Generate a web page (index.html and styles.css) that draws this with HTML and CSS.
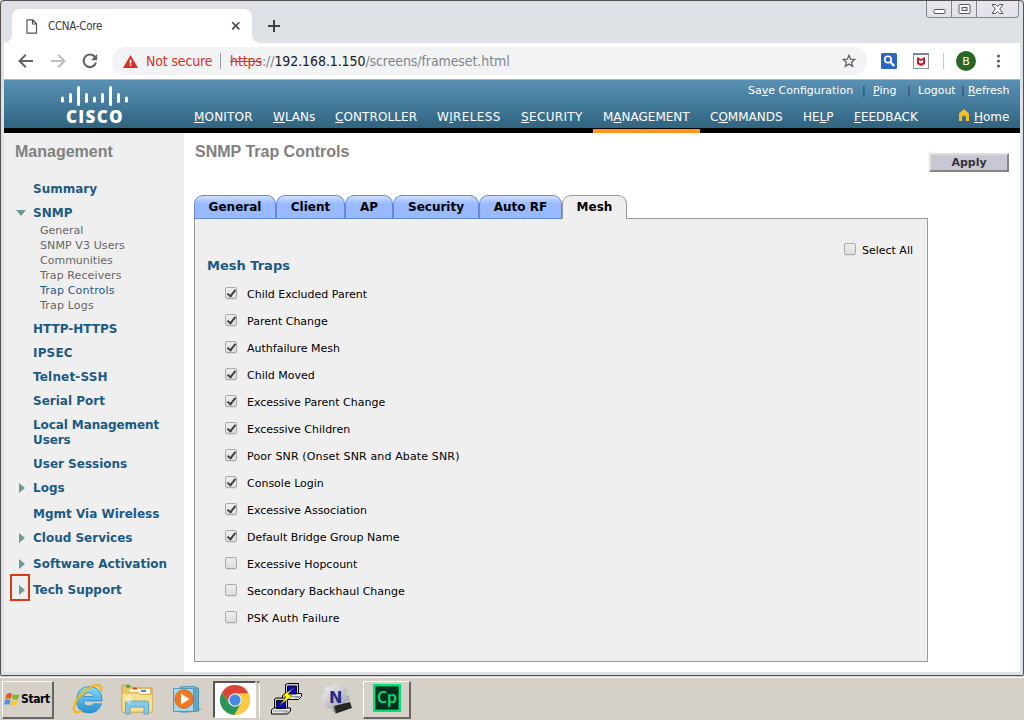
FILE: index.html
```
<!DOCTYPE html>
<html lang="en">
<head>
<meta charset="utf-8">
<title>CCNA-Core</title>
<link rel="stylesheet" href="styles.css">
</head>
<body>
<div class="window">
  <div class="tabstrip">
    <div class="browser-tab">
      <svg class="doc-icon" width="12" height="15" viewBox="0 0 12 15"><path d="M1 .8h5.800l3.700 4v9.400H1zM6.500 1v4h4" fill="none" stroke="#50545a" stroke-width="1.200"/></svg>
      <span class="tab-title">CCNA-Core</span>
      <svg width="10" height="10" viewBox="0 0 10 10"><path d="M1.200 1.200l7.200 7.200M8.400 1.200L1.200 8.400" stroke="#45494e" stroke-width="1.600"/></svg>
    </div>
    <svg class="new-tab" width="12" height="12" viewBox="0 0 12 12"><path d="M6 0v12M0 6h12" stroke="#3c4043" stroke-width="2"/></svg>
    <div class="win-buttons">
      <span class="wb"><svg width="13" height="12" viewBox="0 0 13 12"><rect x="1" y="6.500" width="11" height="4" rx="1" fill="#fff" stroke="#54565c"/></svg></span>
      <span class="wb"><svg width="13" height="12" viewBox="0 0 13 12"><rect x="1" y="1.500" width="11" height="9" rx="1" fill="#fff" stroke="#54565c"/><rect x="4" y="4.500" width="5" height="3" fill="#e3e4eb" stroke="#54565c"/></svg></span>
      <span class="wb"><svg width="13" height="12" viewBox="0 0 13 12"><path d="M1 1.500h3.500l2 2 2-2H12L8.700 6l3.300 4.500H8.500l-2-2-2 2H1L4.300 6z" fill="#fff" stroke="#54565c"/></svg></span>
    </div>
  </div>
  <div class="toolbar">
    <svg width="98" height="24" viewBox="0 0 98 24">
      <path d="M29 12H16.500M21.800 5.700L15.500 12l6.300 6.300" fill="none" stroke="#5f6368" stroke-width="2"/>
      <path d="M47 12h13M54.200 5.700l6.300 6.300-6.300 6.300" fill="none" stroke="#bcbec1" stroke-width="2"/>
      <path d="M91 8a6.300 6.300 0 1 0 1 5.500" fill="none" stroke="#5f6368" stroke-width="2.100"/><path d="M93.200 5v6.200h-6.200z" fill="#5f6368"/>
    </svg>
    <div class="omnibox">
      <svg width="15" height="13" viewBox="0 0 15 13"><path d="M7.500 0L15 13H0z" fill="#d93025"/><path d="M6.700 4.500h1.700v4H6.700zM6.700 9.500h1.700V11H6.700z" fill="#fff"/></svg>
      <span class="not-secure">Not secure</span>
      <span class="addr-sep"></span>
      <span class="url"><s>https</s>://<b>192.168.1.150</b>/screens/frameset.html</span>
      <svg class="star" width="14" height="14" viewBox="0 0 14 14"><path d="M7 1.300l1.600 3.900 4.200.3-3.200 2.700 1 4.100L7 10.100l-3.600 2.200 1-4.100L1.200 5.500l4.200-.3z" fill="none" stroke="#5f6368" stroke-width="1.300"/></svg>
    </div>
    <svg class="extensions" width="130" height="24" viewBox="0 0 130 24">
      <rect x="0" y="4" width="16" height="16" rx="1.500" fill="#2f66bd"/><circle cx="7" cy="10.500" r="3.200" fill="none" stroke="#fff" stroke-width="1.600"/><path d="M9.300 13l4 4" stroke="#fff" stroke-width="2.200"/>
      <rect x="32.500" y="4.500" width="15" height="15" fill="#f7f7f7" stroke="#8a969c"/><path d="M32 4h16v2H32z" fill="#718a96"/><path d="M36 8l4 2 4-2v7l-4 2-4-2z" fill="#be1e2d"/><path d="M38 11l2 1 2-1v2.500l-2 1-2-1z" fill="#fff"/>
      <path d="M62.500 4v16" stroke="#c6c8ca"/>
      <circle cx="85" cy="12" r="10" fill="#286621"/><text class="avatar" x="85" y="16" text-anchor="middle">B</text>
      <circle cx="117.500" cy="7" r="1.600" fill="#5f6368"/><circle cx="117.500" cy="12" r="1.600" fill="#5f6368"/><circle cx="117.500" cy="17" r="1.600" fill="#5f6368"/>
    </svg>
  </div>

  <header class="header">
    <div class="logo">
      <svg width="70" height="22" viewBox="0 0 70 22"><path d="M2.500 13v3M10.500 9.500v7M18.500 2.500v17M26.500 9.500v7M34.500 13v3M42.500 9.500v7M50.500 2.500v17M58.500 9.500v7M66.500 13v3" stroke="#fff" stroke-width="3" stroke-linecap="round"/></svg>
      <span class="logo-text">CISCO</span>
    </div>
    <div class="menus">
      <div class="util">
        <a>Sa<u>v</u>e Configuration</a><i>|</i><a><u>P</u>ing</a><i>|</i><a>Logout</a><i>|</i><a><u>R</u>efresh</a>
      </div>
      <nav class="nav">
        <a class="s2"><u>M</u>ONITOR</a><a><u>W</u>LANs</a><a class="s1"><u>C</u>ONTROLLER</a><a class="s3">W<u>I</u>RELESS</a><a class="s3"><u>S</u>ECURITY</a><a class="active">M<u>A</u>NAGEMENT</a><a>C<u>O</u>MMANDS</a><a>HE<u>L</u>P</a><a><u>F</u>EEDBACK</a>
        <a class="home"><svg width="10" height="12" viewBox="0 0 10 12"><path d="M5 0l5 4.500V12H7V8.500a2 2 0 0 0-4 0V12H0V4.500z" fill="#f7bd27"/></svg><span><u>H</u>ome</span></a>
      </nav>
    </div>
  </header>

  <div class="body">
    <aside class="sidebar">
      <h2 class="heading">Management</h2>
      <ul class="side-list">
        <li>Summary</li>
        <li class="open">SNMP
          <ul class="sub"><li>General</li><li class="s1">SNMP V3 Users</li><li>Communities</li><li class="s1">Trap Receivers</li><li class="current s2">Trap Controls</li><li class="s2">Trap Logs</li></ul>
        </li>
        <li>HTTP-HTTPS</li>
        <li class="s2">IPSEC</li>
        <li class="s2">Telnet-SSH</li>
        <li>Serial Port</li>
        <li class="n1">Local Management<br>Users</li>
        <li>User Sessions</li>
        <li class="closed wide">Logs</li>
        <li>Mgmt Via Wireless</li>
        <li class="closed wide">Cloud Services</li>
        <li class="closed wide">Software Activation</li>
        <li class="closed marked">Tech Support</li>
      </ul>
    </aside>
    <main class="main">
      <div class="title-row">
        <h2 class="heading">SNMP Trap Controls</h2>
        <button class="apply">Apply</button>
      </div>
      <div class="tabs">
        <span class="tab t1">General</span><span class="tab t2">Client</span><span class="tab t3">AP</span><span class="tab t4">Security</span><span class="tab t5">Auto RF</span><span class="tab t6 selected">Mesh</span>
      </div>
      <section class="panel">
        <div class="select-all"><span class="box"></span><span>Select All</span></div>
        <h3 class="group">Mesh Traps</h3>
        <div class="row"><span class="box on"></span><span>Child Excluded Parent</span></div>
        <div class="row"><span class="box on"></span><span>Parent Change</span></div>
        <div class="row"><span class="box on"></span><span>Authfailure Mesh</span></div>
        <div class="row"><span class="box on"></span><span>Child Moved</span></div>
        <div class="row"><span class="box on"></span><span>Excessive Parent Change</span></div>
        <div class="row"><span class="box on"></span><span>Excessive Children</span></div>
        <div class="row"><span class="box on"></span><span class="snr">Poor SNR (Onset SNR and Abate SNR)</span></div>
        <div class="row"><span class="box on"></span><span>Console Login</span></div>
        <div class="row"><span class="box on"></span><span>Excessive Association</span></div>
        <div class="row"><span class="box on"></span><span>Default Bridge Group Name</span></div>
        <div class="row"><span class="box"></span><span>Excessive Hopcount</span></div>
        <div class="row"><span class="box"></span><span>Secondary Backhaul Change</span></div>
        <div class="row"><span class="box"></span><span class="s2">PSK Auth Failure</span></div>
      </section>
    </main>
  </div>
</div>

<footer class="taskbar">
  <div class="start">
    <svg width="16" height="15" viewBox="0 0 16 15"><path d="M2.500 2.500Q5 0 8 1.800L6.800 7Q4 5.500 1 7.500z" fill="#e85a22"/><path d="M9 2.200q3 1.300 6.500 0L14 7q-3 1.500-6-.2z" fill="#81b52b"/><path d="M.8 8.500Q4 6.500 6.500 8L5.300 13Q3 11.500 0 13z" fill="#4f8fe0"/><path d="M7.500 8.200q3 1.500 6.300 0L12.300 13q-3 1.500-6 .2z" fill="#fbc72b"/></svg>
    <span>Start</span>
  </div>
  <svg class="ico ie" width="32" height="32" viewBox="0 0 32 32">
    <defs><linearGradient id="ieg" x2="0" y2="1"><stop stop-color="#83dcfb"/><stop offset="1" stop-color="#2390d2"/></linearGradient></defs>
    <path d="M30 18H11.500q.7 5 5.300 5 3.300 0 4.600-2.200h8Q26.500 30 17 30 4.500 29.500 4.500 17 5 4 17 3.500 30.500 4.500 30 18zM11.600 13.500h10.200q-.8-4-5-4-4.300 0-5.200 4z" fill="url(#ieg)" stroke="#2583bd" stroke-width=".7"/>
    <path d="M29 8.500C31 .5 24 .5 16.500 5.500 6.500 12 -.5 23 2.500 28q2 2.800 7.500-.5" fill="none" stroke="#f5b518" stroke-width="2.200"/>
  </svg>
  <svg class="ico folder" width="32" height="32" viewBox="0 0 32 32">
    <path d="M1 3q0-1 1-1h7l2 3h20v24H1z" fill="#e7c76c" stroke="#c5a047"/><path d="M5 2.500h4v2H5z" fill="#21a72e"/><path d="M8 5.500h21v4H8z" fill="#fff8df" stroke="#d8b962"/><path d="M12 4.500h4v2h-4z" fill="#c9492c"/><path d="M18 7.500h11v3H18z" fill="#fff"/><path d="M20 7h5v2h-5z" fill="#2f8bd5"/><path d="M1 10h17l1 1.500h12.500V29H1z" fill="#f5df91" stroke="#d4b151" stroke-width=".8"/>
    <path d="M4.500 31V20q0-2 2-2h19q2 0 2 2v11h-4.500v-7H9v7z" fill="#87c8e6" stroke="#4e9ac2" stroke-width=".8"/><path d="M8 12v9M3.500 16.500h9M5 13.500l6 6M11 13.500l-6 6" stroke="#fff" stroke-width=".8"/>
  </svg>
  <svg class="ico media" width="30" height="30" viewBox="0 0 30 30">
    <path d="M10 2l15.500 1v23L10 27z" fill="#68aeca" stroke="#488dab"/><path d="M7 2l15-.5v25L7 27z" fill="#8bcce5" stroke="#498fae"/><path d="M.5 3.500h20v23H.5z" fill="#a3d8ec" stroke="#5399b8"/><path d="M26 23l3 1-3 2z" fill="#aaa"/><circle cx="11" cy="14" r="9.200" fill="#f17820" stroke="#dc5811" stroke-width=".8"/><path d="M8 8.500l8.500 5.500L8 19.500z" fill="#fff"/>
  </svg>
  <div class="pressed">
    <svg width="30" height="30" viewBox="0 0 30 30"><circle cx="15" cy="15" r="15" fill="#fbc943"/><path d="M2 7.500A15 15 0 0 1 28.500 8.500H15L8.700 17z" fill="#db4437"/><path d="M2 7.500l7.200 11 11.500 0L14.500 30A15 15 0 0 1 2 7.500z" fill="#28955b"/><path d="M28.500 8.500A15 15 0 0 1 14.500 30l6.800-11.500L21 8.500z" fill="#fbc943"/><circle cx="15" cy="15" r="6.800" fill="#eee"/><circle cx="15" cy="15" r="5.500" fill="#4688ed"/></svg>
  </div>
  <span class="stack-edge"></span>
  <svg class="ico putty" width="32" height="32" viewBox="0 0 32 32">
    <g id="pc"><path d="M14.500 1.500l2-1h11v14h-13z" fill="#c9c9c9" stroke="#000"/><path d="M11.500 12.500l2-2h17v3l-3 3h-16z" fill="#e6e6e6" stroke="#000"/><path d="M16.500 3h9v8h-9z" fill="#0907c8" stroke="#111"/><path d="M13 13.500h16M24 14.500h4" stroke="#929292"/></g>
    <use href="#pc" x="-11" y="14.500"/><path d="M23 5l-11 7 3 2-6 8 12-9-4-2z" fill="#fffb00" stroke="#525000" stroke-width=".6"/>
  </svg>
  <svg class="ico netapp" width="30" height="32" viewBox="0 0 30 32">
    <defs><linearGradient id="gear" gradientUnits="userSpaceOnUse" x1="4" y1="2" x2="23" y2="28"><stop stop-color="#eceef0"/><stop offset="1" stop-color="#9a9fa4"/></linearGradient></defs>
    <circle cx="13.500" cy="15" r="12" fill="none" stroke="url(#gear)" stroke-width="4" stroke-dasharray="5.400 4.025" transform="rotate(-12 13.500 15)"/><circle cx="13.500" cy="15" r="11.700" fill="url(#gear)"/><text class="n-mark" x="7" y="20">N</text><path d="M12 23l16-4 2 6-16 5.500z" fill="#272727"/><path d="M12 23l1.500 7.500" stroke="#666"/>
  </svg>
  <div class="raised"><svg width="28" height="28" viewBox="0 0 28 28"><rect x="1.200" y="1.200" width="25.600" height="25.600" fill="#042e20" stroke="#00e477" stroke-width="2.400"/><text class="cp-mark" x="14" y="19" text-anchor="middle">Cp</text></svg></div>
</footer>
</body>
</html>
```
FILE: styles.css
```
*, *::before, *::after { box-sizing: border-box; }
body { margin: 0; width: 1024px; height: 720px; overflow: hidden; display: flex; flex-direction: column; background: #d5d1c8; font: 11px "DejaVu Sans", sans-serif; }
svg { display: block; flex: none; }
ul, h2, h3 { margin: 0; padding: 0; list-style: none; }

/* Tracking adjustments for labels */
.s1 { letter-spacing: .1px; }
.s2 { letter-spacing: .18px; }
.s3 { letter-spacing: .35px; }
.n1 { letter-spacing: -.1px; }
.snr { letter-spacing: .14px; }

.window { height: 676px; flex: none; display: flex; flex-direction: column; border: 1px solid #505050; border-radius: 4px 4px 2px 2px; padding: 0 3px 3px; background: #dee1e6; }
.tabstrip { height: 42px; flex: none; display: flex; background: #dee1e6; }
.browser-tab { margin: 8px 0 0 8px; width: 240px; height: 34px; border-radius: 8px 8px 0 0; background: #fff; display: flex; align-items: center; padding: 0 11px 0 14px; position: relative; }
.browser-tab::before, .browser-tab::after { content: ""; position: absolute; bottom: 0; width: 8px; height: 8px; }
.browser-tab::before { left: -8px; background: radial-gradient(circle at 0 0, #dee1e6 7.500px, #fff 8px); }
.browser-tab::after { right: -8px; background: radial-gradient(circle at 100% 0, #dee1e6 7.500px, #fff 8px); }
.tab-title { flex: 1; margin-left: 10px; font: 11.500px "DejaVu Sans Condensed", "DejaVu Sans", sans-serif; letter-spacing: -.3px; color: #3c4043; }
.new-tab { margin: 19px 0 0 16px; }
.win-buttons { margin-left: auto; height: 17px; display: flex; border: 1px solid #85878d; border-top: 0; border-radius: 0 0 4px 4px; background: linear-gradient(#e9e3ec, #e1e3e8); margin-right: 1px; }
.wb { width: 25px; display: flex; justify-content: center; align-items: flex-start; border-right: 1px solid #85878d; padding-top: 2px; }
.wb:last-child { width: 41px; border: 0; }

.toolbar { height: 37px; flex: none; display: flex; align-items: center; background: #fff; border-bottom: 1px solid #b5b5b5; }
.omnibox { margin-left: 10px; width: 755px; height: 28px; border-radius: 14px; background: #f1f3f4; display: flex; align-items: center; padding: 0 11px; font: 14px "DejaVu Sans Condensed", "DejaVu Sans", sans-serif; }
.not-secure { margin-left: 8px; width: 74px; letter-spacing: -.15px; color: #d93025; white-space: nowrap; }
.addr-sep { width: 1px; height: 16px; background: #9a9da1; margin-right: 9px; }
.url { color: #80868b; letter-spacing: -.09px; white-space: nowrap; }
.url s { color: #d93025; }
.url b { color: #202124; font-weight: normal; }
.star { margin-left: auto; }
.extensions { margin-left: 14px; }
.avatar { font: 11px "DejaVu Sans", sans-serif; fill: #fff; }

.header { height: 53px; flex: none; display: flex; color: #fff; background: linear-gradient(#5991b4, #306480 48px, #000 48px); }
.logo { width: 190px; padding: 5px 0 0 56px; }
.logo-text { display: block; margin: 1px 0 0 6px; font: 800 17px/17px "Open Sans", "Noto Sans", sans-serif; letter-spacing: 1.300px; }
.menus { flex: 1; }
.util { height: 25px; display: grid; grid-template-columns: 114px 11px 34px 11px 43px 7px 42px; justify-content: end; padding: 4px 10px 0 0; line-height: 14px; white-space: nowrap; }
.util i { font-style: normal; color: #214467; }
.nav { height: 28px; display: grid; grid-template-columns: 79px 62px 102px 84px 72px 107px 103px 51px 104px 52px; font-size: 12px; line-height: 24px; white-space: nowrap; }
.nav .active { padding-left: 10px; border-bottom: 5px solid #ff951a; }
.nav a:nth-child(7) { padding-left: 10px; }
.home { display: flex; gap: 5px; padding-left: 1px; }
.home svg { margin-top: 4px; }

.body { flex: 1; display: flex; min-height: 0; background: #fff; }
.sidebar { width: 180px; background: #efefef; padding: 10px 0 0 11px; }
.heading { font: bold 16px/18px "Liberation Sans", Arial, sans-serif; color: #808080; }
.side-list { margin-top: 21px; padding-left: 18px; font: bold 12px/15px "DejaVu Sans", sans-serif; color: #1c5a83; white-space: nowrap; }
.side-list > li { margin-bottom: 9px; position: relative; }
.side-list > .wide { margin-bottom: 11px; }
.open::before { content: ""; position: absolute; left: -17px; top: 4px; width: 10px; border: 5px solid transparent; border-top: 6px solid #689b99; border-bottom: 0; }
.closed::before { content: ""; position: absolute; left: -14px; top: 2px; border: 5px solid transparent; border-left: 6px solid #689b99; border-right: 0; }
.marked::after { content: ""; position: absolute; left: -23px; top: -9px; width: 20px; height: 27px; border: 2px solid #d83b0c; }
.sub { padding: 2px 0 0 7px; font-weight: normal; font-size: 11px; color: #666; }
.sub .current { color: #1c5a83; }

.main { flex: 1; padding: 10px 11px 0 10px; }
.title-row { height: 52px; display: flex; justify-content: space-between; padding-left: 1px; }
.apply { width: 80px; height: 19px; margin-top: 10px; padding: 0; border: 2px solid; border-color: #dedede #858585 #858585 #dedede; background: #c8c8d4; color: #333; font: bold 11px/15px "DejaVu Sans", sans-serif; }
.tabs { display: flex; height: 24px; position: relative; z-index: 1; }
.tab { height: 24px; border: 1px solid #638bd5; border-radius: 9px 9px 0 0; background: linear-gradient(#cfe0fe, #99bafe 8px); color: #000; font: bold 12px/22px "DejaVu Sans", sans-serif; text-align: center; }
.t1 { width: 82px; } .t2 { width: 69px; } .t3 { width: 48px; } .t4 { width: 86px; } .t5 { width: 83px; }
.t6 { width: 65px; }
.tab.selected { border-color: #999; border-bottom: 0; background: #efefef; }
.panel { width: 734px; height: 444px; margin-top: -1px; border: 1px solid #999; background: #efefef; color: #000; padding: 22px 14px 0 12px; }
.select-all { display: flex; align-items: center; justify-content: flex-end; gap: 6px; height: 16px; }
.select-all span + span { padding-top: 2px; }
.box { width: 12px; height: 12px; flex: none; border: 1px solid #aaa; border-radius: 2px; background: linear-gradient(#eee, #ddd); box-shadow: 0 1px 0 #ddd; }
.on { display: flex; justify-content: center; }
.on::before { content: ""; width: 5px; height: 9px; border: solid #404040; border-width: 0 2px 2px 0; transform: rotate(38deg); }
.group { margin: 0 0 6px; font: bold 13px/15px "DejaVu Sans", sans-serif; color: #1c5a83; padding-top: 1px; }
.row { height: 27px; display: flex; align-items: center; gap: 10px; padding-left: 18px; }
.row span + span { padding-top: 3px; }

.taskbar { height: 44px; flex: none; display: flex; align-items: flex-start; padding: 4px 2px 0; border-top: 1px solid #d0cdc4; box-shadow: inset 0 1px #fff; }
.start { width: 52px; height: 38px; display: flex; align-items: center; gap: 1px; padding-left: 1px; border: 1px solid #fff; border-right: 2px solid #666; border-bottom: 2px solid #666; font: bold 12px "DejaVu Sans Condensed", "DejaVu Sans", sans-serif; letter-spacing: -.4px; }
.start span { margin-top: -1px; }
.ico { margin-top: 2px; }
.ie { margin-left: 18px; }
.folder { margin-left: 17px; }
.media { margin: 4px 0 0 20px; }
.pressed { width: 43px; height: 37px; margin-left: 10px; border: 1px solid #555; border-width: 2px 1px 1px 2px; border-right-color: #fff; border-bottom-color: #fff; background: #fff; padding: 2px 0 0 5px; }
.stack-edge { width: 3px; height: 37px; margin-left: 1px; border-top: 2px solid #777; border-right: 1px solid #fff; }
.putty { margin-left: 11px; }
.netapp { margin-left: 19px; }
.raised { width: 48px; height: 38px; margin-left: 11px; border: 1px solid #fff; border-right: 2px solid #666; border-bottom: 2px solid #666; padding: 2px 0 0 9px; }
.n-mark { font: bold 16px "DejaVu Sans", sans-serif; fill: #252b87; }
.cp-mark { font: 600 16px "Open Sans", "Noto Sans", sans-serif; fill: #00e477; }
```
